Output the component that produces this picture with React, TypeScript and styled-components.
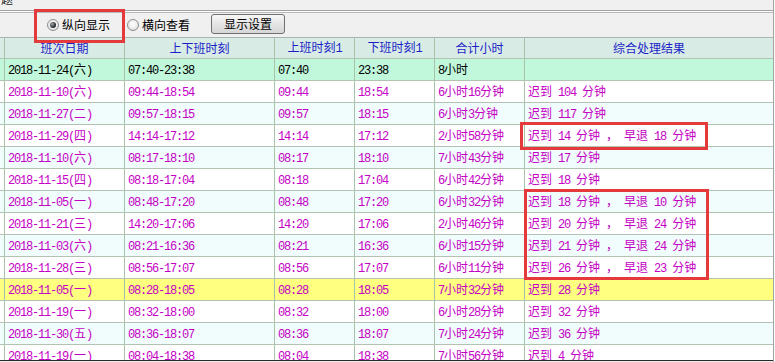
import React from "react";
import styled, { createGlobalStyle, css } from "styled-components";

const GlobalStyle = createGlobalStyle`
  html, body {
    margin: 0;
    padding: 0;
    width: 775px;
    height: 362px;
    overflow: hidden;
    background: #f7fbfb;
  }
  #root { width: 775px; height: 362px; }
`;

const SANS = `"Noto Sans CJK SC", "Noto Sans", sans-serif`;
const COLS = "4px 120px 150px 80px 80px 90px 249px";
const GRID_LINE = "#a9c3a9";

const Page = styled.div`
  position: relative;
  width: 773px;
  height: 362px;
  border-right: 1px solid #a4a4a4;
  background: #f0f0f0;
  display: flex;
  flex-direction: column;
  overflow: hidden;
`;

const TopStrip = styled.div`
  height: 10px;
  overflow: hidden;
  padding-left: 1px;
`;

const ClippedTitle = styled.div`
  font-family: ${SANS};
  font-size: 12px;
  line-height: 12px;
  margin-top: -7px;
  color: #222;
`;

const Groove = styled.div`
  height: 3px;
  box-sizing: border-box;
  border-top: 1px solid #a0a0a0;
  border-bottom: 1px solid #b8b8b8;
  background: #ffffff;
`;

const Toolbar = styled.div`
  height: 24px;
  display: flex;
  align-items: center;
  padding-left: 47px;
  font-family: ${SANS};
  font-size: 12px;
  color: #000;
`;

const RadioOption = styled.label<{ $gap: number }>`
  display: flex;
  align-items: center;
  gap: 3px;
  margin-right: ${(p) => p.$gap}px;
  line-height: 14px;
`;

const RadioCircle = styled.span<{ $checked?: boolean }>`
  width: 12px;
  height: 12px;
  box-sizing: border-box;
  border-radius: 50%;
  border: 1px solid #8d8e8e;
  background: radial-gradient(circle at 50% 40%, #ffffff 0, #ececec 55%, #cfcfcf 100%);
  display: flex;
  align-items: center;
  justify-content: center;
  ${(p) =>
    p.$checked &&
    css`
      &::after {
        content: "";
        width: 6px;
        height: 6px;
        border-radius: 50%;
        background: radial-gradient(circle at 35% 35%, #a4aaae 0, #2b2e30 60%, #111 100%);
      }
    `}
`;

const SettingsButton = styled.button`
  align-self: flex-start;
  margin-top: 1px;
  width: 74px;
  height: 20px;
  padding: 0;
  border: 1px solid #707070;
  border-radius: 3px;
  background: linear-gradient(#f8f8f8, #e4e4e4 50%, #d6d6d6);
  font-family: ${SANS};
  font-size: 12px;
  line-height: 16px;
  color: #000;
`;

const Grid = styled.div`
  flex: 1;
  overflow: hidden;
  display: flex;
  flex-direction: column;
  background: #ffffff;
  border-bottom: 1px solid #2a2a2a;
  margin-bottom: 1px;
`;

type Tone = "head" | "current" | "selected" | "even" | "odd";

const toneBg: Record<Tone, string> = {
  head: "#d8ece5",
  current: "#c1f8db",
  selected: "#ffff80",
  even: "#ffffff",
  odd: "#f1fcfc",
};

const toneColor: Record<Tone, string> = {
  head: "#1e1ec8",
  current: "#000000",
  selected: "#c400c4",
  even: "#c400c4",
  odd: "#c400c4",
};

const Row = styled.div<{ $tone: Tone }>`
  flex: 0 0 auto;
  display: grid;
  grid-template-columns: ${COLS};
  height: 22px;
  box-sizing: border-box;
  border-bottom: 1px solid #b3c2b3;
  background: ${(p) => toneBg[p.$tone]};
  color: ${(p) => toneColor[p.$tone]};
  font-family: ${SANS};
  font-size: 12px;
  ${(p) =>
    p.$tone === "head" &&
    css`
      border-top: 1px solid #a8b4ae;
    `}
`;

const Cell = styled.div<{ $center?: boolean }>`
  display: flex;
  align-items: center;
  justify-content: ${(p) => (p.$center ? "center" : "flex-start")};
  padding-left: ${(p) => (p.$center ? 0 : 3)}px;
  border-left: 1px solid ${GRID_LINE};
  overflow: hidden;
  line-height: 14px;
`;

const CellText = styled.span`
  white-space: pre;
`;

const Latin = styled.span`
  font-family: "Liberation Mono", "DejaVu Sans Mono", monospace;
  font-size: 12px;
  letter-spacing: -1.2px;
`;

const Gutter = styled.div``;

const Annotation = styled.div<{ $x: number; $y: number; $w: number; $h: number }>`
  position: absolute;
  left: ${(p) => p.$x}px;
  top: ${(p) => p.$y}px;
  width: ${(p) => p.$w}px;
  height: ${(p) => p.$h}px;
  box-sizing: border-box;
  border: 3px solid #e53a3c;
  pointer-events: none;
`;

function MixedText({ text }: { text: string }) {
  const parts = text.match(/[\x00-\x7F]+|[^\x00-\x7F]+/g) || [];
  return (
    <CellText>
      {parts.map((p, i) =>
        /^[\x00-\x7F]+$/.test(p) ? <Latin key={i}>{p}</Latin> : <React.Fragment key={i}>{p}</React.Fragment>
      )}
    </CellText>
  );
}

const headers = ["班次日期", "上下班时刻", "上班时刻1", "下班时刻1", "合计小时", "综合处理结果"];

type Rec = [string, string, string, string, string, string];

const records: Rec[] = [
  ["2018-11-24(六)", "07:40-23:38", "07:40", "23:38", "8小时", ""],
  ["2018-11-10(六)", "09:44-18:54", "09:44", "18:54", "6小时16分钟", "迟到 104 分钟"],
  ["2018-11-27(二)", "09:57-18:15", "09:57", "18:15", "6小时3分钟", "迟到 117 分钟"],
  ["2018-11-29(四)", "14:14-17:12", "14:14", "17:12", "2小时58分钟", "迟到 14 分钟 ， 早退 18 分钟"],
  ["2018-11-10(六)", "08:17-18:10", "08:17", "18:10", "7小时43分钟", "迟到 17 分钟"],
  ["2018-11-15(四)", "08:18-17:04", "08:18", "17:04", "6小时42分钟", "迟到 18 分钟"],
  ["2018-11-05(一)", "08:48-17:20", "08:48", "17:20", "6小时32分钟", "迟到 18 分钟 ， 早退 10 分钟"],
  ["2018-11-21(三)", "14:20-17:06", "14:20", "17:06", "2小时46分钟", "迟到 20 分钟 ， 早退 24 分钟"],
  ["2018-11-03(六)", "08:21-16:36", "08:21", "16:36", "6小时15分钟", "迟到 21 分钟 ， 早退 24 分钟"],
  ["2018-11-28(三)", "08:56-17:07", "08:56", "17:07", "6小时11分钟", "迟到 26 分钟 ， 早退 23 分钟"],
  ["2018-11-05(一)", "08:28-18:05", "08:28", "18:05", "7小时32分钟", "迟到 28 分钟"],
  ["2018-11-19(一)", "08:32-18:00", "08:32", "18:00", "6小时28分钟", "迟到 32 分钟"],
  ["2018-11-30(五)", "08:36-18:07", "08:36", "18:07", "7小时24分钟", "迟到 36 分钟"],
  ["2018-11-19(一)", "08:04-18:38", "08:04", "18:38", "7小时56分钟", "迟到 4 分钟"],
];

function toneFor(i: number): Tone {
  if (i === 0) return "current";
  if (i === 10) return "selected";
  return i % 2 === 1 ? "even" : "odd";
}

export default function App() {
  return (
    <>
      <GlobalStyle />
      <Page>
        <TopStrip>
          <ClippedTitle>题</ClippedTitle>
        </TopStrip>
        <Groove />
        <Toolbar>
          <RadioOption $gap={17}>
            <RadioCircle $checked />
            纵向显示
          </RadioOption>
          <RadioOption $gap={21}>
            <RadioCircle />
            横向查看
          </RadioOption>
          <SettingsButton>显示设置</SettingsButton>
        </Toolbar>
        <Grid>
          <Row $tone="head">
            <Gutter />
            {headers.map((h) => (
              <Cell key={h} $center>
                <MixedText text={h} />
              </Cell>
            ))}
          </Row>
          {records.map((r, i) => (
            <Row key={i} $tone={toneFor(i)}>
              <Gutter />
              {r.map((v, j) => (
                <Cell key={j}>
                  <MixedText text={v} />
                </Cell>
              ))}
            </Row>
          ))}
        </Grid>
        <Annotation $x={34} $y={9} $w={91} $h={34} />
        <Annotation $x={520} $y={122} $w={188} $h={28} />
        <Annotation $x={524} $y={189} $w={185} $h={91} />
      </Page>
    </>
  );
}
